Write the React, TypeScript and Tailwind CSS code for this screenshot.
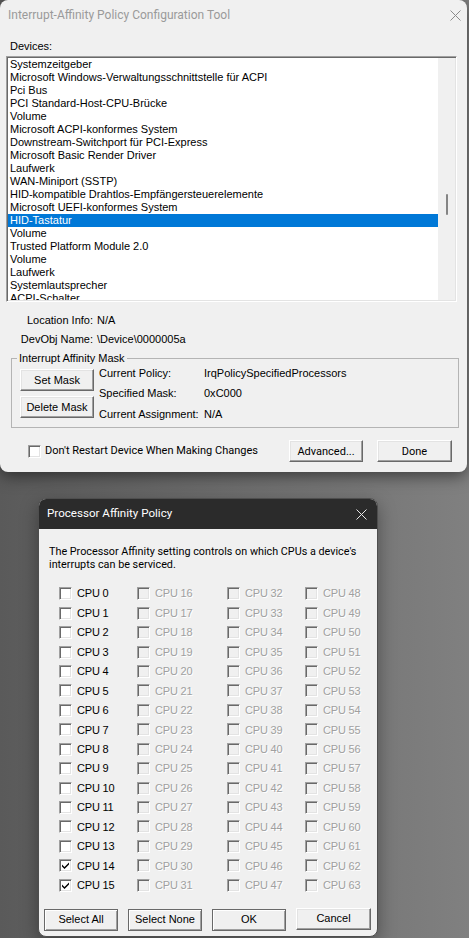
import React from 'react'

const devices = [
  'Systemzeitgeber',
  'Microsoft Windows-Verwaltungsschnittstelle für ACPI',
  'Pci Bus',
  'PCI Standard-Host-CPU-Brücke',
  'Volume',
  'Microsoft ACPI-konformes System',
  'Downstream-Switchport für PCI-Express',
  'Microsoft Basic Render Driver',
  'Laufwerk',
  'WAN-Miniport (SSTP)',
  'HID-kompatible Drahtlos-Empfängersteuerelemente',
  'Microsoft UEFI-konformes System',
  'HID-Tastatur',
  'Volume',
  'Trusted Platform Module 2.0',
  'Volume',
  'Laufwerk',
  'Systemlautsprecher',
  'ACPI-Schalter',
]

const selectedDevice = 12
const mask = 0xc000
const cpuCount = 16

// classic 3D edges
const sunken =
  'border border-t-[#a0a0a0] border-l-[#a0a0a0] border-b-white border-r-white shadow-[inset_1px_1px_0_#696969,inset_-1px_-1px_0_#e3e3e3]'
const raised =
  'border border-t-white border-l-white border-b-[#696969] border-r-[#696969] shadow-[inset_-1px_-1px_0_#a0a0a0,inset_1px_1px_0_#e3e3e3] bg-[#f0f0f0]'
const framed =
  'border border-[#696969] shadow-[inset_1px_1px_0_#ffffff,inset_-1px_-1px_0_#a0a0a0] bg-[#f0f0f0]'

function CloseIcon({ className }: { className: string }) {
  return (
    <svg viewBox="0 0 11 11" className={className} fill="none" stroke="currentColor" strokeWidth="1">
      <path d="M0.5 0.5 L10.5 10.5 M10.5 0.5 L0.5 10.5" />
    </svg>
  )
}

function CheckBox({ checked = false, disabled = false }: { checked?: boolean; disabled?: boolean }) {
  return (
    <span
      className={`flex items-center justify-center w-[13px] h-[13px] shrink-0 ${sunken} ${
        disabled ? 'bg-[#f0f0f0]' : 'bg-white'
      }`}
    >
      {checked && (
        <svg viewBox="0 0 9 9" className="w-[9px] h-[9px]" fill="#000">
          <path d="M1 3.5 L3.5 6 L8 1.5 L8 3.5 L3.5 8 L1 5.5 Z" />
        </svg>
      )}
    </span>
  )
}

function Btn({ label, className = '', look = raised }: { label: string; className?: string; look?: string }) {
  return (
    <button
      className={`h-[22px] flex items-center justify-center text-black text-[11px] leading-none font-['Liberation_Sans',Arial,sans-serif] ${look} ${className}`}
    >
      {label}
    </button>
  )
}

function MainWindow() {
  return (
    <div className="w-[467px] h-[472px] shrink-0 bg-[#f0f0f0] rounded-[8px] flex flex-col shadow-[0_4px_16px_rgba(0,0,0,0.5)] text-[11px] text-black font-['Liberation_Sans',Arial,sans-serif]">
      {/* title bar (inactive) */}
      <div className="h-[30px] flex items-center justify-between pl-[8px] pr-[6px]">
        <span className="text-[12px] text-[#9a9a9a] font-['Roboto',sans-serif]">
          Interrupt-Affinity Policy Configuration Tool
        </span>
        <CloseIcon className="w-[11px] h-[11px] text-[#8a8a8a]" />
      </div>

      <div className="mt-[10px] ml-[10px] leading-[13px]">Devices:</div>

      {/* device list */}
      <div className={`mt-[3px] ml-[6px] w-[451px] h-[246px] p-[1px] flex bg-white overflow-hidden ${sunken}`}>
        <div className="flex-1 overflow-hidden">
          {devices.map((d, i) => (
            <div
              key={i}
              className={`h-[13px] leading-[13px] pl-[2px] whitespace-nowrap ${
                i === selectedDevice ? 'bg-[#0078d7] text-white' : ''
              }`}
            >
              {d}
            </div>
          ))}
        </div>
        <div className="w-[17px] bg-[#f0f0f0] pl-[8px] pt-[136px]">
          <div className="w-[2px] h-[21px] rounded-full bg-[#858585]" />
        </div>
      </div>

      {/* device info */}
      <div className="mt-[12px] ml-[6px] grid grid-cols-[87px_auto] gap-x-[4px] gap-y-[6px] leading-[13px]">
        <span className="text-right">Location Info:</span>
        <span>N/A</span>
        <span className="text-right">DevObj Name:</span>
        <span>\Device\0000005a</span>
      </div>

      {/* affinity mask group */}
      <fieldset className="mt-[5px] ml-[11px] w-[448px] border border-[#b4b4b4] pb-[5px]">
        <legend className="ml-[5px] px-[2px] leading-[14px]">Interrupt Affinity Mask</legend>
        <div className="flex pl-[8px]">
          <div className="flex flex-col gap-[5px] pt-[4px]">
            <Btn label="Set Mask" className="w-[74px]" />
            <Btn label="Delete Mask" className="w-[74px]" />
          </div>
          <div className="ml-[5px] grid grid-cols-[105px_auto] leading-[16px]">
            <span>Current Policy:</span>
            <span>IrqPolicySpecifiedProcessors</span>
            <span className="mt-[4px]">Specified Mask:</span>
            <span className="mt-[4px]">0x{mask.toString(16).toUpperCase()}</span>
            <span className="mt-[5px]">Current Assignment:</span>
            <span className="mt-[5px]">N/A</span>
          </div>
        </div>
      </fieldset>

      <div className="mt-[12px] h-[22px] flex items-center">
        <span className="ml-[28px]">
          <CheckBox />
        </span>
        <span className="ml-[4px] text-[11px] font-['Roboto',sans-serif]">
          Don't Restart Device When Making Changes
        </span>
        <Btn label="Advanced..." className="ml-auto w-[74px] text-[11px] font-['Roboto',sans-serif]" />
        <Btn label="Done" className="ml-[14px] mr-[15px] w-[75px] text-[11px] font-['Roboto',sans-serif]" />
      </div>
    </div>
  )
}

function CpuCell({ n }: { n: number }) {
  const disabled = n >= cpuCount
  const checked = !disabled && ((mask >> n) & 1) === 1
  return (
    <div className="h-[19.45px] flex items-center">
      <CheckBox checked={checked} disabled={disabled} />
      <span
        className={`ml-[5px] whitespace-nowrap tracking-[-0.2px] ${
          disabled ? 'text-[#a0a0a0] [text-shadow:1px_1px_0_#ffffff]' : 'text-black'
        }`}
      >
        CPU {n}
      </span>
    </div>
  )
}

function AffinityDialog() {
  const columns = [0, 16, 32, 48]
  return (
    <div className="mt-[26px] ml-[38px] w-[340px] shrink-0 rounded-[8px] overflow-hidden border border-[#4e4e4e] bg-[#f0f0f0] shadow-[0_6px_18px_rgba(0,0,0,0.35)] text-[11px] font-['Liberation_Sans',Arial,sans-serif]">
      <div className="h-[30px] bg-[#2b2b2b] flex items-center justify-between pl-[8px] pr-[10px]">
        <span className="text-[11.6px] text-white font-['Roboto',sans-serif]">Processor Affinity Policy</span>
        <CloseIcon className="w-[11px] h-[11px] text-[#e6e6e6]" />
      </div>

      <p className="pt-[16px] pl-[10px] text-[10.8px] leading-[13px] whitespace-nowrap text-black font-['Roboto',sans-serif]">
        The Processor Affinity setting controls on which CPUs a device's
        <br />
        interrupts can be serviced.
      </p>

      <div className="mt-[13px] pl-[20px] grid grid-cols-[78px_90px_78px_1fr]">
        {columns.map((start) => (
          <div key={start} className="flex flex-col">
            {Array.from({ length: 16 }, (_, i) => (
              <CpuCell key={i} n={start + i} />
            ))}
          </div>
        ))}
      </div>

      <div className="mt-[13.5px] pl-[5px] pb-[5px] flex items-start gap-[10px]">
        <Btn label="Select All" look={framed} className="w-[74px]" />
        <Btn label="Select None" look={framed} className="w-[74px]" />
        <Btn label="OK" look={framed} className="w-[74px]" />
        <Btn label="Cancel" className="w-[75px] -mt-[1px]" />
      </div>
    </div>
  )
}

export default function App() {
  return (
    <div className="w-[469px] h-[938px] overflow-hidden flex flex-col bg-linear-to-r from-[#5a5a5a] via-[#6e6e6e] to-[#808080]">
      <MainWindow />
      <AffinityDialog />
    </div>
  )
}
